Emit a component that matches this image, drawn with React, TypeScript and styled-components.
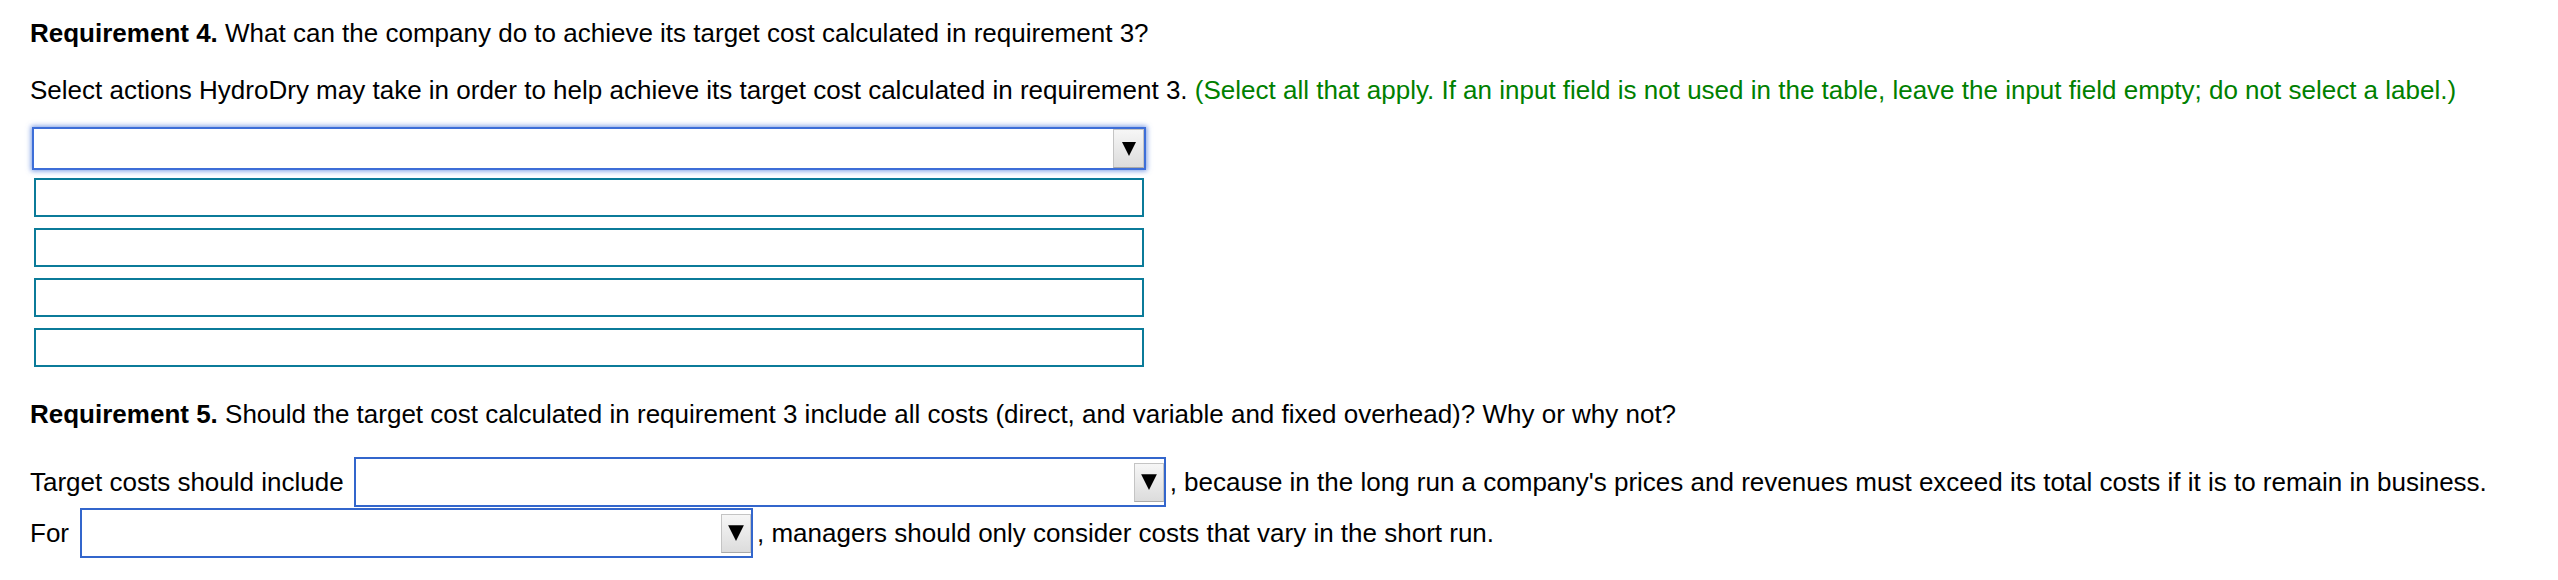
import styled, { createGlobalStyle } from "styled-components";

const GlobalStyle = createGlobalStyle`
    body {
        margin: 0;
        background: #fff;
        color: #000;
        font-family: "Liberation Sans", Arial, sans-serif;
    }
`;

function Arrow({ size }: { size: number }) {
    return (
        <svg width={size} height={size + 2} viewBox="0 0 14 16" aria-hidden="true">
            <polygon points="0,1 14,1 7,15" fill="#000" />
        </svg>
    );
}

function App() {
    return (
        <Page>
            <GlobalStyle />
            <Para>
                <b>Requirement 4.</b> What can the company do to achieve its target cost calculated in
                requirement 3?
            </Para>
            <Para $top={27}>
                Select actions HydroDry may take in order to help achieve its target cost calculated in
                requirement 3.{" "}
                <Hint>
                    (Select all that apply. If an input field is not used in the table, leave the input
                    field empty; do not select a label.)
                </Hint>
            </Para>

            <ActionList>
                <FocusedDropdown>
                    <DropButton $full>
                        <Arrow size={14} />
                    </DropButton>
                </FocusedDropdown>
                <TextBoxes>
                    {[0, 1, 2, 3].map((i) => (
                        <TextBox key={i} />
                    ))}
                </TextBoxes>
            </ActionList>

            <Para $top={32}>
                <b>Requirement 5.</b> Should the target cost calculated in requirement 3 include all costs
                (direct, and variable and fixed overhead)? Why or why not?
            </Para>

            <Rows>
                <Row>
                    <span>Target costs should include</span>
                    <Select $width={812} $lead={10}>
                        <DropButton>
                            <Arrow size={16} />
                        </DropButton>
                    </Select>
                    <span>
                        , because in the long run a company's prices and revenues must exceed its total costs
                        if it is to remain in business.
                    </span>
                </Row>
                <Row>
                    <span>For</span>
                    <Select $width={673} $lead={11}>
                        <DropButton>
                            <Arrow size={16} />
                        </DropButton>
                    </Select>
                    <span>, managers should only consider costs that vary in the short run.</span>
                </Row>
            </Rows>
        </Page>
    );
}

const Page = styled.div`
    padding: 18px 0 0 30px;
    font-size: 26px;
`;

const Para = styled.p<{ $top?: number }>`
    margin: ${({ $top }) => $top ?? 0}px 0 0;
    line-height: 30px;
    white-space: nowrap;
`;

const Hint = styled.span`
    color: #008000;
`;

const ActionList = styled.div`
    display: flex;
    flex-direction: column;
    margin-top: 22px;
`;

const FocusedDropdown = styled.div`
    box-sizing: border-box;
    width: 1114px;
    height: 43px;
    margin-left: 2px;
    display: flex;
    justify-content: flex-end;
    border: 2px solid #3d6ed8;
    box-shadow: 0 0 5px 1px rgba(61, 110, 216, 0.7);
    background: #fff;
`;

const DropButton = styled.div<{ $full?: boolean }>`
    box-sizing: border-box;
    width: ${({ $full }) => ($full ? 31 : 30)}px;
    height: 39px;
    display: flex;
    align-items: center;
    justify-content: center;
    border: 1px solid #c4c4c4;
    border-bottom-color: #a9a9a9;
    background: linear-gradient(#f6f6f6, #dcdcdc);
`;

const TextBoxes = styled.div`
    display: flex;
    flex-direction: column;
    gap: 11px;
    margin: 8px 0 0 4px;
`;

const TextBox = styled.div`
    box-sizing: border-box;
    width: 1110px;
    height: 39px;
    border: 2px solid #0b7b99;
`;

const Rows = styled.div`
    display: flex;
    flex-direction: column;
    gap: 1px;
    margin-top: 28px;
`;

const Row = styled.div`
    display: flex;
    align-items: center;
    height: 50px;
    white-space: nowrap;
`;

const Select = styled.div<{ $width: number; $lead: number }>`
    box-sizing: border-box;
    width: ${({ $width }) => $width}px;
    height: 50px;
    margin: 0 4px 0 ${({ $lead }) => $lead}px;
    display: flex;
    align-items: center;
    justify-content: flex-end;
    border: 2px solid #3366cc;
    background: #fff;
`;

export default App;
